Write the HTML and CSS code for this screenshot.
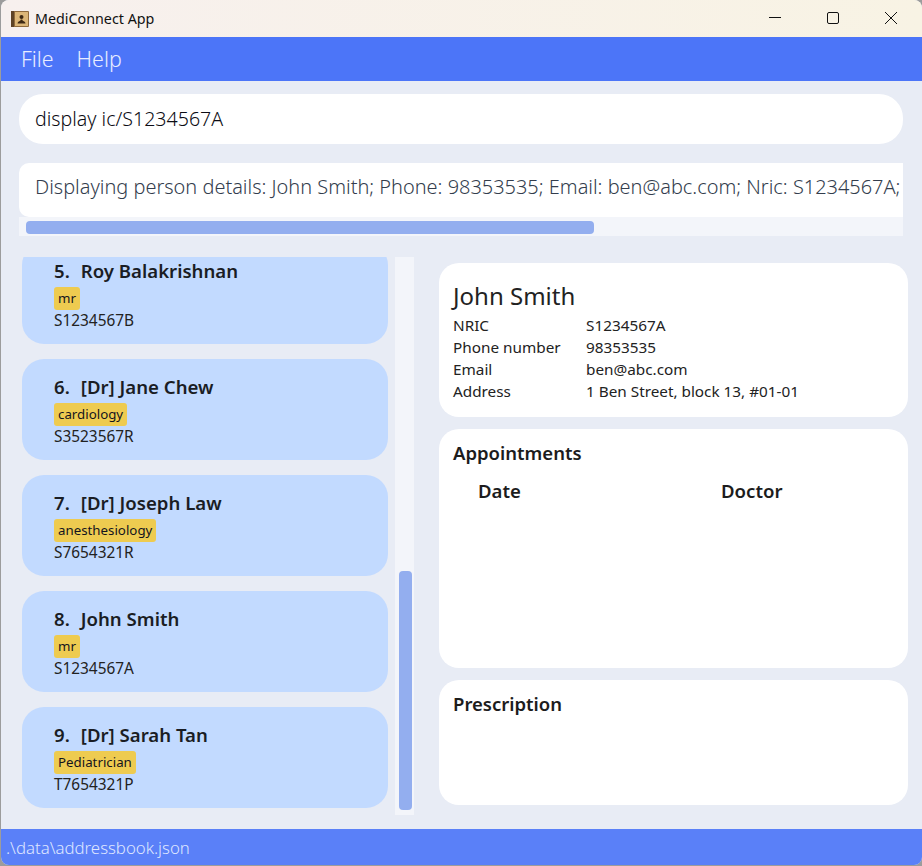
FILE: index.html
```html
<!DOCTYPE html>
<html lang="en">

<head>
    <meta charset="UTF-8">
    <meta name="viewport" content="width=device-width, initial-scale=1.0">
    <title>MediConnect App</title>
    <link rel="stylesheet" href="styles.css">
</head>

<body>
    <div class="ventana">
        <div class="barraTitulo">
            <svg class="icono" width="18" height="18" viewBox="0 0 18 18">
                <rect x="0" y="1" width="18" height="16" rx="1" fill="#8f6a3c" />
                <rect x="0" y="1" width="3" height="16" fill="#5e4326" />
                <rect x="4" y="2" width="13" height="14" fill="#dcb678" />
                <circle cx="10.5" cy="7" r="2" fill="#3d2814" />
                <path d="M6.500 13.500 L7 12 C8 11 9.500 11 9.800 9.500 H11.200 C11.500 11 13 11 14 12 L14.500 13.500 Z" fill="#3d2814" />
            </svg>
            <span class="tituloTexto">MediConnect App</span>
            <div class="controles">
                <svg width="58" height="37" viewBox="0 0 58 37"><path d="M23 17.500 H35" stroke="#111" fill="none" /></svg>
                <svg width="58" height="37" viewBox="0 0 58 37"><rect x="23.500" y="12.500" width="11" height="11" rx="1.500" stroke="#111" fill="none" /></svg>
                <svg width="58" height="37" viewBox="0 0 58 37"><path d="M23 12 L35 24 M35 12 L23 24" stroke="#111" fill="none" /></svg>
            </div>
        </div>

        <div class="menu">
            <span>File</span>
            <span>Help</span>
        </div>

        <div class="comando">display ic/S1234567A</div>

        <div class="resultado">
            <div class="resultadoTexto">Displaying person details: John Smith; Phone: 98353535; Email: ben@abc.com; Nric: S1234567A;</div>
            <div class="pista"><div class="pulgar"></div></div>
        </div>

        <div class="principal">
            <div class="lista">
                <div class="tarjetas">
                    <div class="tarjeta primera">
                        <div class="nombre"><span class="num">5.</span>Roy Balakrishnan</div>
                        <div><span class="etiqueta">mr</span></div>
                        <div class="nric">S1234567B</div>
                    </div>
                    <div class="tarjeta">
                        <div class="nombre"><span class="num">6.</span>[Dr] Jane Chew</div>
                        <div><span class="etiqueta">cardiology</span></div>
                        <div class="nric">S3523567R</div>
                    </div>
                    <div class="tarjeta">
                        <div class="nombre"><span class="num">7.</span>[Dr] Joseph Law</div>
                        <div><span class="etiqueta">anesthesiology</span></div>
                        <div class="nric">S7654321R</div>
                    </div>
                    <div class="tarjeta">
                        <div class="nombre"><span class="num">8.</span>John Smith</div>
                        <div><span class="etiqueta">mr</span></div>
                        <div class="nric">S1234567A</div>
                    </div>
                    <div class="tarjeta">
                        <div class="nombre"><span class="num">9.</span>[Dr] Sarah Tan</div>
                        <div><span class="etiqueta">Pediatrician</span></div>
                        <div class="nric">T7654321P</div>
                    </div>
                </div>
                <div class="pistaLista"><div class="pulgarLista"></div></div>
            </div>

            <div class="detalle">
                <div class="panel datos">
                    <div class="nombreGrande">John Smith</div>
                    <div class="tablaDatos">
                        <span>NRIC</span><span>S1234567A</span>
                        <span>Phone number</span><span>98353535</span>
                        <span>Email</span><span>ben@abc.com</span>
                        <span>Address</span><span>1 Ben Street, block 13, #01-01</span>
                    </div>
                </div>
                <div class="panel citas">
                    <div class="tituloPanel">Appointments</div>
                    <div class="cabeceras">
                        <span>Date</span>
                        <span>Doctor</span>
                    </div>
                </div>
                <div class="panel receta">
                    <div class="tituloPanel">Prescription</div>
                </div>
            </div>
        </div>

        <div class="estado">.\data\addressbook.json</div>
    </div>
</body>

</html>
```

FILE: styles.css
```css
html,
body {
    margin: 0;
    height: 100%;
    background-color: #9c9c9c;
    overflow: hidden;
}

body {
    font-family: "Noto Sans", "Open Sans", sans-serif;
    color: #1c1c1c;
}

.ventana {
    width: 921px;
    height: 865px;
    margin-left: 1px;
    background-color: #e8ecf5;
    border-radius: 8px;
    overflow: hidden;
    display: flex;
    flex-direction: column;
}

.barraTitulo {
    height: 37px;
    flex: none;
    display: flex;
    align-items: center;
    padding: 0 2px 0 10px;
    background: linear-gradient(90deg, #f7f0ee, #f8f3e4);
}

.tituloTexto {
    margin-left: 6px;
    font-size: 14.3px;
    color: #111;
}

.controles {
    margin-left: auto;
    display: flex;
}

.menu {
    height: 44px;
    flex: none;
    display: flex;
    align-items: center;
    gap: 23px;
    padding: 0 0 2px 20px;
    box-sizing: border-box;
    background-color: #4c75f8;
    color: #e8edff;
    font-size: 21.4px;
    font-weight: 300;
}

.comando {
    height: 50px;
    flex: none;
    margin: 13px 19px 0 18px;
    padding: 0 0 2px 16px;
    box-sizing: border-box;
    display: flex;
    align-items: center;
    background-color: white;
    border-radius: 24px;
    font-size: 19.6px;
    font-weight: 300;
    color: #0c0c14;
}

.resultado {
    height: 73px;
    flex: none;
    margin: 19px 19px 0 18px;
    display: flex;
    flex-direction: column;
}

.resultadoTexto {
    height: 54px;
    flex: none;
    padding-left: 16px;
    line-height: 48px;
    background-color: white;
    border-radius: 10px 0 0 10px;
    font-size: 19.95px;
    font-weight: 300;
    color: #333d4d;
    white-space: nowrap;
    overflow: hidden;
}

.pista {
    height: 19px;
    background-color: #f3f5fa;
    padding: 4px 0 0 7px;
    box-sizing: border-box;
}

.pulgar {
    width: 568px;
    height: 13px;
    background-color: #93aeef;
    border-radius: 4px;
}

.principal {
    display: flex;
    margin-top: 21px;
}

.lista {
    width: 413px;
    height: 558px;
    flex: none;
    display: flex;
}

.tarjetas {
    width: 394px;
    overflow: hidden;
    padding-left: 21px;
    box-sizing: border-box;
}

.tarjeta {
    width: 366px;
    height: 101px;
    box-sizing: border-box;
    margin-bottom: 15px;
    padding: 15px 0 0 32px;
    background-color: #c2daff;
    border-radius: 22px;
}

.primera {
    margin-top: -14px;
}

.nombre {
    font-size: 18.6px;
    font-weight: 600;
    line-height: 26px;
    color: #1a1d24;
}

.num {
    margin-right: 11px;
}

.etiqueta {
    display: inline-block;
    padding: 0 4px;
    height: 23px;
    line-height: 22px;
    font-size: 13.3px;
    background-color: #eecb50;
    border-radius: 3px;
    color: #14141e;
    margin-top: 3px;
}

.nric {
    font-size: 15.4px;
    line-height: 22px;
    color: #222;
}

.pistaLista {
    width: 19px;
    background-color: #f3f5fa;
    padding: 314px 0 5px 4px;
    box-sizing: border-box;
}

.pulgarLista {
    width: 13px;
    height: 239px;
    background-color: #93aeef;
    border-radius: 4px;
}

.detalle {
    width: 469px;
    margin: 6px 0 0 25px;
    display: flex;
    flex-direction: column;
    gap: 12px;
}

.panel {
    background-color: white;
    border-radius: 20px;
    padding: 0 14px;
    box-sizing: border-box;
}

.datos {
    height: 154px;
    padding-top: 15px;
}

.citas {
    height: 239px;
    padding-top: 10px;
}

.receta {
    height: 125px;
    padding-top: 10px;
}

.nombreGrande {
    font-size: 24px;
    line-height: 36px;
    color: #222;
}

.tablaDatos {
    display: grid;
    grid-template-columns: 133px auto;
    font-size: 15.3px;
    line-height: 22px;
    color: #222;
}

.tituloPanel {
    font-size: 18.5px;
    font-weight: 600;
    line-height: 28px;
}

.cabeceras {
    display: grid;
    grid-template-columns: 243px auto;
    margin-top: 10px;
    padding-left: 25px;
    font-size: 18.6px;
    font-weight: 600;
    line-height: 28px;
}

.estado {
    margin-top: auto;
    height: 36px;
    flex: none;
    padding-left: 5px;
    line-height: 38px;
    background-color: #5a80f8;
    color: #dfe6ff;
    font-size: 16.800px;
    font-weight: 300;
}
```
